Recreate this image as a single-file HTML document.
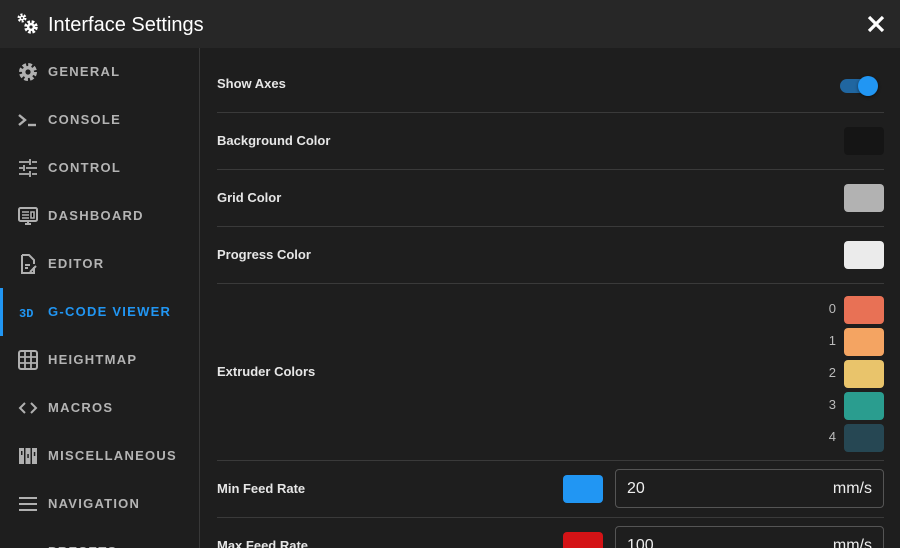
<!DOCTYPE html>
<html><head><meta charset="utf-8"><style>
*{box-sizing:border-box;margin:0;padding:0}
html{width:900px;height:548px;overflow:hidden}
body{width:900px;height:548px;overflow:hidden;background:#1e1e1e;font-family:"Liberation Sans",sans-serif;color:#fff;position:relative}
.hdr{position:absolute;left:0;top:0;width:900px;height:48px;background:#272727}
.hdr .t{position:absolute;left:48px;top:14px;font-size:20px;color:#fff}
.side{position:absolute;left:0;top:48px;width:200px;height:500px;border-right:1px solid #383838;overflow:hidden}
.nav{position:absolute;left:0;height:48px;width:200px}
.nav span{position:absolute;left:48px;top:16px;font-size:13px;font-weight:bold;letter-spacing:1.25px;color:#b4b4b4}
.nav svg{position:absolute;left:18px;top:14px}
.act span{color:#2196f3}
.row{position:absolute;left:217px;width:667px;border-bottom:1px solid #3a3a3a}
.lbl{position:absolute;left:217px;font-size:13px;font-weight:bold;color:#e6e6e6}
.sw{position:absolute;width:40px;height:28px;border-radius:4px;left:844px}
.num{position:absolute;left:820px;width:16px;text-align:right;font-size:13px;color:#bbb}
.inp{position:absolute;left:615px;width:269px;height:39px;border:1px solid #555;border-radius:4px}
.inp .v{position:absolute;left:11px;top:10px;font-size:16px;color:#eee}
.inp .u{position:absolute;right:11px;top:10px;font-size:16px;color:#eee}
</style></head><body>
<div class="hdr">
<svg style="position:absolute;left:17px;top:13px" width="22" height="22" viewBox="0 0 22 22"><circle cx="5" cy="5" r="3" fill="none" stroke="#fff" stroke-width="3" stroke-dasharray="1.8 1.3"/><circle cx="5" cy="5" r="2.5" fill="#fff"/><circle cx="5" cy="5" r="1" fill="#272727"/><circle cx="14" cy="14" r="5" fill="none" stroke="#fff" stroke-width="3.5" stroke-dasharray="2.5 1.5"/><circle cx="14" cy="14" r="4" fill="#fff"/><circle cx="14" cy="14" r="1.6" fill="#272727"/></svg>
<div class="t">Interface Settings</div>
<svg style="position:absolute;left:867px;top:15px" width="18" height="18" viewBox="0 0 18 18"><path d="M2 2L16 16M16 2L2 16" stroke="#fff" stroke-width="3.2"/></svg>
</div>
<div class="side">
<div class="nav" style="top:0"><svg width="20" height="20" viewBox="0 0 20 20"><circle cx="10" cy="10" r="7" fill="none" stroke="#b0b0b0" stroke-width="4" stroke-dasharray="3.5 2"/><circle cx="10" cy="10" r="6" fill="#b0b0b0"/><circle cx="10" cy="10" r="2.6" fill="#1e1e1e"/></svg><span>GENERAL</span></div>
<div class="nav" style="top:48px"><svg width="20" height="20" viewBox="0 0 20 20"><path d="M1 5l6 5-6 5" fill="none" stroke="#b0b0b0" stroke-width="2.4"/><path d="M10 15h8" stroke="#b0b0b0" stroke-width="2.4"/></svg><span>CONSOLE</span></div>
<div class="nav" style="top:96px"><svg width="20" height="20" viewBox="0 0 20 20"><path d="M1 4h10M14 4h5M1 10h4M8 10h11M1 16h10M14 16h5M12 1v6M6 7v6M12 13v6" stroke="#b0b0b0" stroke-width="1.8"/></svg><span>CONTROL</span></div>
<div class="nav" style="top:144px"><svg width="20" height="20" viewBox="0 0 20 20"><rect x="1" y="2" width="18" height="13" rx="1.5" fill="none" stroke="#b0b0b0" stroke-width="2"/><path d="M4 6h7M4 9h7M4 12h7M13 6h3v6h-3z" stroke="#b0b0b0" stroke-width="1.6"/><path d="M7 18h6M10 15v3" stroke="#b0b0b0" stroke-width="2"/></svg><span>DASHBOARD</span></div>
<div class="nav" style="top:192px"><svg width="20" height="20" viewBox="0 0 20 20"><path d="M4 1h7l5 5v4M16 13v6H4V1" fill="none" stroke="#b0b0b0" stroke-width="2"/><path d="M7 11h5M7 14h3M12 18l6-6" stroke="#b0b0b0" stroke-width="2"/></svg><span>EDITOR</span></div>
<div class="nav act" style="top:240px"><div style="position:absolute;left:0;top:0;width:3px;height:48px;background:#2196f3"></div><svg width="20" height="20" viewBox="0 0 20 20"><text x="1" y="15" font-family="Liberation Mono" font-weight="bold" font-size="12" fill="#2196f3">3D</text></svg><span>G-CODE VIEWER</span></div>
<div class="nav" style="top:288px"><svg width="20" height="20" viewBox="0 0 20 20"><rect x="1" y="1" width="18" height="18" rx="2" fill="none" stroke="#b0b0b0" stroke-width="2"/><path d="M7 1v18M13 1v18M1 7h18M1 13h18" stroke="#b0b0b0" stroke-width="1.8"/></svg><span>HEIGHTMAP</span></div>
<div class="nav" style="top:336px"><svg width="20" height="20" viewBox="0 0 20 20"><path d="M7 5l-5 5 5 5M13 5l5 5-5 5" fill="none" stroke="#b0b0b0" stroke-width="2"/></svg><span>MACROS</span></div>
<div class="nav" style="top:384px"><svg width="20" height="20" viewBox="0 0 20 20"><rect x="1" y="2" width="5" height="16" fill="#b0b0b0"/><rect x="7.5" y="2" width="5" height="16" fill="#b0b0b0"/><rect x="14" y="2" width="5" height="16" fill="#b0b0b0"/><rect x="3" y="5" width="1.5" height="4" fill="#1e1e1e"/><rect x="9.3" y="8" width="1.5" height="4" fill="#1e1e1e"/><rect x="15.8" y="6" width="1.5" height="4" fill="#1e1e1e"/></svg><span>MISCELLANEOUS</span></div>
<div class="nav" style="top:432px"><svg width="20" height="20" viewBox="0 0 20 20"><path d="M1 4h18M1 10h18M1 16h18" stroke="#b0b0b0" stroke-width="2"/></svg><span>NAVIGATION</span></div>
<div class="nav" style="top:480px"><span>PRESETS</span></div>
</div>
<div class="row" style="top:48px;height:65px"></div>
<div class="lbl" style="top:76px">Show Axes</div>
<div style="position:absolute;left:840px;top:79px;width:32px;height:14px;border-radius:7px;background:#2066a0"></div>
<div style="position:absolute;left:858px;top:76px;width:20px;height:20px;border-radius:10px;background:#2196f3;box-shadow:0 1px 3px rgba(0,0,0,.5)"></div>
<div class="row" style="top:113px;height:57px"></div>
<div class="lbl" style="top:133px">Background Color</div>
<div class="sw" style="top:127px;background:#151515"></div>
<div class="row" style="top:170px;height:57px"></div>
<div class="lbl" style="top:190px">Grid Color</div>
<div class="sw" style="top:184px;background:#b2b2b2"></div>
<div class="row" style="top:227px;height:57px"></div>
<div class="lbl" style="top:247px">Progress Color</div>
<div class="sw" style="top:241px;background:#ebebeb"></div>
<div class="row" style="top:284px;height:177px"></div>
<div class="lbl" style="top:364px">Extruder Colors</div>
<div class="num" style="top:301px">0</div><div class="sw" style="top:296px;background:#e87155"></div>
<div class="num" style="top:333px">1</div><div class="sw" style="top:328px;background:#f4a462"></div>
<div class="num" style="top:365px">2</div><div class="sw" style="top:360px;background:#e9c46b"></div>
<div class="num" style="top:397px">3</div><div class="sw" style="top:392px;background:#2a9d8f"></div>
<div class="num" style="top:429px">4</div><div class="sw" style="top:424px;background:#264753"></div>
<div class="row" style="top:461px;height:57px"></div>
<div class="lbl" style="top:481px">Min Feed Rate</div>
<div class="sw" style="left:563px;top:475px;background:#2196f3"></div>
<div class="inp" style="top:469px"><span class="v">20</span><span class="u">mm/s</span></div>
<div class="lbl" style="top:538px">Max Feed Rate</div>
<div class="sw" style="left:563px;top:532px;background:#d41316"></div>
<div class="inp" style="top:526px"><span class="v">100</span><span class="u">mm/s</span></div>
</body></html>
